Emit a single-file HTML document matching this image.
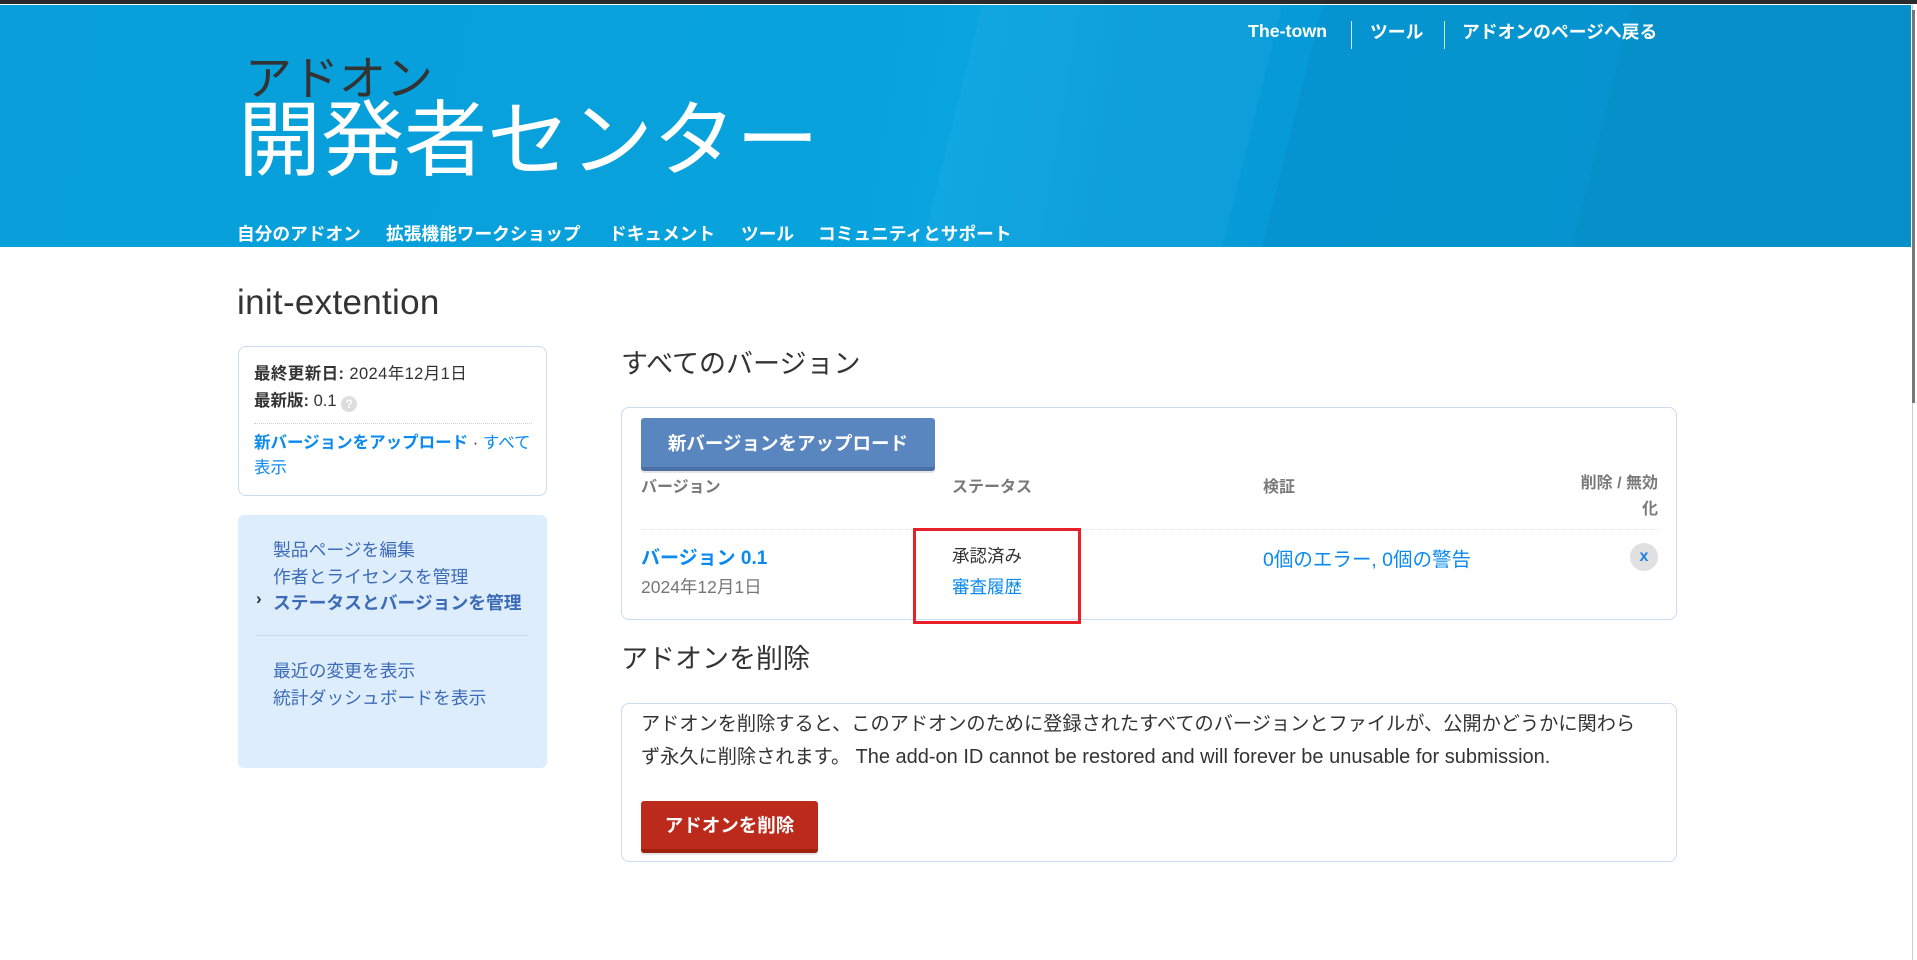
<!DOCTYPE html>
<html><head><meta charset="utf-8">
<style>
*{margin:0;padding:0;box-sizing:border-box}
body{width:1917px;height:960px;overflow:hidden;background:#fff;position:relative;font-family:"Liberation Sans","Noto Sans CJK JP",sans-serif;color:#333}
.a{position:absolute;white-space:nowrap}
#top{position:absolute;left:0;top:0;width:1917px;height:4px;background:#2b2b2d}
#hdr{position:absolute;left:0;top:5px;width:1911px;height:242px;background:linear-gradient(100deg,#089fda 0%,#08a2dd 45%,#0aa5e0 50%,#079bd8 60%,#0898d6 100%);overflow:hidden}
.band{position:absolute;top:0;height:260px;transform:skewX(-14deg);}
.tl{color:#fff;font-weight:bold;font-size:17.8px;line-height:24px;top:15px}
.sep{position:absolute;top:16px;width:1px;height:28px;background:#fff;opacity:.8}
.nav{color:#fff;font-weight:bold;font-size:17.7px}
.box{position:absolute;border:1px solid #c9dcf2;border-radius:8px;background:#fff}
.lnk{color:#0a8af0}
.ln{color:#3c6bb8;font-size:17.8px;left:273px}
.th{color:#7a7a7a;font-weight:bold;font-size:16px}
</style></head><body>
<div id="top"></div>
<div id="hdr">
 <div class="band" style="left:950px;width:300px;background:rgba(255,255,255,0.03)"></div>
 <div class="band" style="left:1290px;width:700px;background:rgba(0,0,0,0.035)"></div>
 <div class="band" style="left:1600px;width:400px;background:rgba(0,0,0,0.02)"></div>
 <div class="a tl" style="left:1248px;top:14px">The-town</div>
 <div class="sep" style="left:1351px"></div>
 <div class="a tl" style="left:1370px">ツール</div>
 <div class="sep" style="left:1444px"></div>
 <div class="a tl" style="left:1462px">アドオンのページへ戻る</div>
 <div class="a" style="left:245px;top:46px;font-size:47px;color:#333;line-height:56px">アドオン</div>
 <div class="a" style="left:238px;top:88px;font-size:83px;color:#fff;line-height:96px">開発者センター</div>
 <div class="a nav" style="left:237px;top:215px">自分のアドオン</div>
 <div class="a nav" style="left:386px;top:215px">拡張機能ワークショップ</div>
 <div class="a nav" style="left:609px;top:215px">ドキュメント</div>
 <div class="a nav" style="left:741px;top:215px">ツール</div>
 <div class="a nav" style="left:818px;top:215px">コミュニティとサポート</div>
</div>
<div style="position:absolute;left:1912px;top:5px;width:1px;height:955px;background:#ccc"></div>
<div style="position:absolute;left:1912px;top:10px;width:3px;height:393px;background:#777"></div>

<div class="a" style="left:237px;top:282px;font-size:35px;line-height:42px;color:#333;letter-spacing:0.3px">init-extention</div>

<div class="box" style="left:238px;top:346px;width:309px;height:150px"></div>
<div class="a" style="left:254px;top:363px;font-size:16.5px;line-height:22px;letter-spacing:0.4px"><b>最終更新日:</b> 2024年12月1日</div>
<div class="a" style="left:254px;top:390px;font-size:16.5px;line-height:22px"><b>最新版:</b> 0.1 <span style="display:inline-block;width:16px;height:16px;border-radius:50%;background:#ddd;color:#fff;font-size:12px;text-align:center;line-height:16px;font-weight:bold;vertical-align:-2px">?</span></div>
<div style="position:absolute;left:254px;top:423px;width:278px;border-top:1px dotted #ccc"></div>
<div class="a" style="left:254px;top:431px;font-size:16.5px;line-height:25px;white-space:normal;width:280px"><b class="lnk">新バージョンをアップロード</b> · <span class="lnk">すべて</span><br><span class="lnk">表示</span></div>

<div style="position:absolute;left:238px;top:515px;width:309px;height:253px;background:#deedfc;border-radius:6px"></div>
<div class="a ln" style="top:536px">製品ページを編集</div>
<div class="a ln" style="top:563px">作者とライセンスを管理</div>
<div class="a" style="left:256px;top:589px;font-size:17px;color:#333;font-weight:bold">›</div>
<div class="a ln" style="top:589px;font-weight:bold">ステータスとバージョンを管理</div>
<div style="position:absolute;left:257px;top:635px;width:271px;border-top:1px dotted #b8c8da"></div>
<div class="a ln" style="top:657px">最近の変更を表示</div>
<div class="a ln" style="top:684px">統計ダッシュボードを表示</div>

<div class="a" style="left:621px;top:347px;font-size:27px;line-height:34px">すべてのバージョン</div>
<div class="box" style="left:621px;top:407px;width:1056px;height:213px"></div>
<div style="position:absolute;left:641px;top:418px;width:294px;height:53px;background:#5a86c0;border-bottom:4px solid #4a70a6;border-radius:3px;box-shadow:0 2px 0 #e5e5e5;color:#fff;font-weight:bold;font-size:18.5px;text-align:center;line-height:51px">新バージョンをアップロード</div>
<div class="a th" style="left:641px;top:473px">バージョン</div>
<div class="a th" style="left:952px;top:473px">ステータス</div>
<div class="a th" style="left:1263px;top:473px">検証</div>
<div class="a th" style="left:1570px;top:471px;width:88px;text-align:right;line-height:26px;white-space:normal">削除 / 無効化</div>
<div style="position:absolute;left:641px;top:529px;width:1017px;border-top:1px dotted #ddd"></div>
<div class="a lnk" style="left:641px;top:543px;font-size:19px;font-weight:bold">バージョン 0.1</div>
<div class="a" style="left:641px;top:574px;font-size:17.5px;color:#777">2024年12月1日</div>
<div class="a" style="left:952px;top:543px;font-size:17.5px;color:#333">承認済み</div>
<div class="a lnk" style="left:952px;top:574px;font-size:17.5px">審査履歴</div>
<div class="a lnk" style="left:1263px;top:543px;font-size:19.5px">0個のエラー, 0個の警告</div>
<div style="position:absolute;left:1630px;top:543px;width:28px;height:28px;border-radius:50%;background:#e0e0e0;color:#1a7fe0;font-weight:bold;font-size:16px;text-align:center;line-height:28px">x</div>
<div style="position:absolute;left:913px;top:528px;width:168px;height:96px;border:3.5px solid #e8202a"></div>

<div class="a" style="left:621px;top:642px;font-size:27px;line-height:34px">アドオンを削除</div>
<div class="box" style="left:621px;top:703px;width:1056px;height:159px"></div>
<div class="a" style="left:641px;top:709px;width:1030px;font-size:19.2px;line-height:32px;color:#333">アドオンを削除すると、このアドオンのために登録されたすべてのバージョンとファイルが、公開かどうかに関わら<br>ず永久に削除されます。 <span style="font-size:20px">The add-on ID cannot be restored and will forever be unusable for submission.</span></div>
<div style="position:absolute;left:641px;top:801px;width:177px;height:52px;background:#bc2a1b;border-bottom:4px solid #a0200f;border-radius:3px;box-shadow:0 2px 0 #e5e5e5;color:#fff;font-weight:bold;font-size:18.5px;text-align:center;line-height:50px">アドオンを削除</div>
</body></html>
